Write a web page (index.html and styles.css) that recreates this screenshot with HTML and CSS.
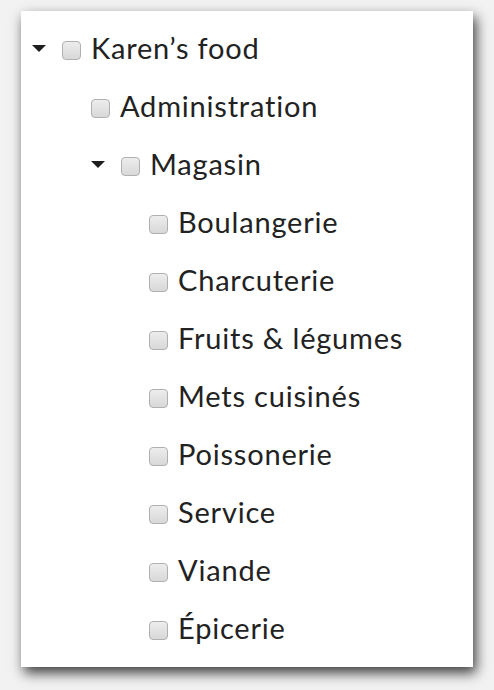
FILE: index.html
```html
<!DOCTYPE html>
<html lang="fr">
<head>
<meta charset="utf-8">
<link rel="stylesheet" href="styles.css">
</head>
<body>
<div class="panel">
  <ul class="tree">
    <li>
      <div class="row">
        <span class="caret"></span>
        <span class="box"></span>
        <span class="label">Karen’s food</span>
      </div>
      <ul class="tree sub">
        <li>
          <div class="row">
            <span class="box"></span>
            <span class="label">Administration</span>
          </div>
        </li>
        <li>
          <div class="row">
            <span class="caret"></span>
            <span class="box"></span>
            <span class="label">Magasin</span>
          </div>
          <ul class="tree sub">
            <li><div class="row"><span class="box"></span><span class="label">Boulangerie</span></div></li>
            <li><div class="row"><span class="box"></span><span class="label">Charcuterie</span></div></li>
            <li><div class="row"><span class="box"></span><span class="label">Fruits &amp; légumes</span></div></li>
            <li><div class="row"><span class="box"></span><span class="label">Mets cuisinés</span></div></li>
            <li><div class="row"><span class="box"></span><span class="label">Poissonerie</span></div></li>
            <li><div class="row"><span class="box"></span><span class="label">Service</span></div></li>
            <li><div class="row"><span class="box"></span><span class="label">Viande</span></div></li>
            <li><div class="row"><span class="box"></span><span class="label">Épicerie</span></div></li>
          </ul>
        </li>
      </ul>
    </li>
  </ul>
</div>
</body>
</html>
```
FILE: styles.css
```css
html, body {
  margin: 0;
  padding: 0;
  background: #f2f2f2;
}
body {
  box-sizing: border-box;
  min-height: 690px;
  padding: 11px 0 23px 21px;
  font-family: Lato, "Noto Sans", sans-serif;
}
.panel {
  width: 452px;
  height: 656px;
  box-sizing: border-box;
  background: #ffffff;
  box-shadow: 3px 6px 12px rgba(0, 0, 0, 0.75);
  padding: 8px 0 0 11px;
}
.tree {
  list-style: none;
  margin: 0;
  padding: 0;
}
.tree.sub {
  padding-left: 59px;
}
.tree.sub .tree.sub {
  padding-left: 58px;
}
.row {
  display: flex;
  align-items: center;
  height: 58px;
}
.caret {
  width: 0;
  height: 0;
  border-left: 7.5px solid transparent;
  border-right: 7.5px solid transparent;
  border-top: 7px solid #1e1e1e;
  margin-right: 16px;
  margin-top: 1px;
}
.box {
  width: 19px;
  height: 19px;
  box-sizing: border-box;
  border: 1px solid #b0b0b0;
  border-radius: 4px;
  background: linear-gradient(#ededed, #d8d8d8);
  margin-right: 10px;
  margin-top: 5px;
  flex: none;
}
.label {
  font-size: 29px;
  letter-spacing: 0.8px;
  font-variant-ligatures: none;
  color: #222222;
  line-height: 34px;
}
```
